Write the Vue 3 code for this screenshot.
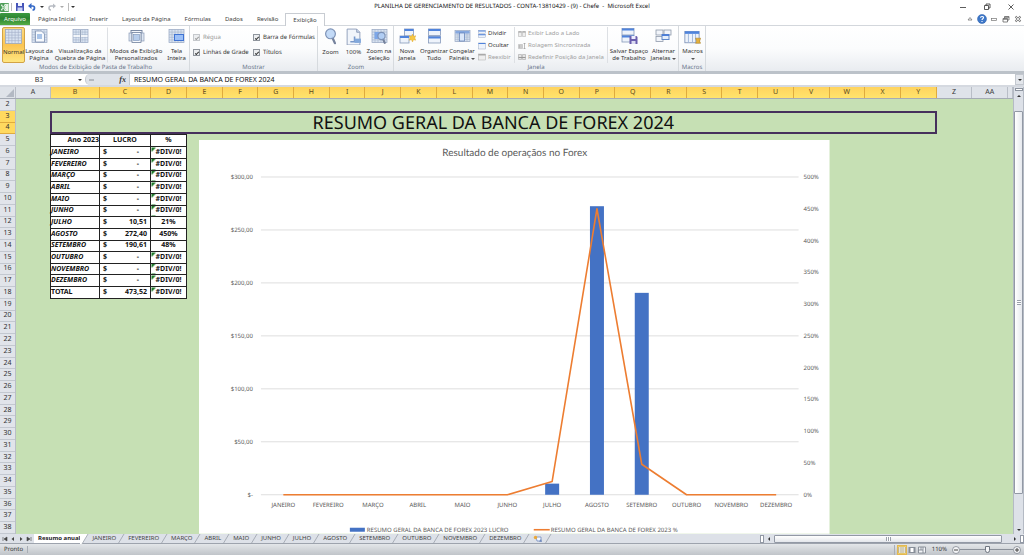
<script setup>
import { computed } from 'vue'

const tabs = ['Página Inicial', 'Inserir', 'Layout da Página', 'Fórmulas', 'Dados', 'Revisão']

const grid = (x, y, w, h) => {
  let s = `<rect x="${x}" y="${y}" width="${w}" height="${h}" fill="#d9e3f1" stroke="#94a4c0" stroke-width=".7"/>`
  for (let i = 1; i < 5; i++) s += `<path d="M${x + (w * i) / 5} ${y}v${h}" stroke="#a3b1ca" stroke-width=".6"/>`
  for (let i = 1; i < 5; i++) s += `<path d="M${x} ${y + (h * i) / 5}h${w}" stroke="#a3b1ca" stroke-width=".6"/>`
  return s
}
const win = (x, y, w, h) =>
  `<rect x="${x}" y="${y}" width="${w}" height="${h}" fill="#eef3fb" stroke="#8598ba" stroke-width=".8"/><path d="M${x} ${y + 1}h${w}" stroke="#4f83dc" stroke-width="2"/>`
const lens = (x, y, r) =>
  `<path d="M${x + r * 0.4} ${y + r * 0.8}l${r * 0.5} ${r * 1.1}" stroke="#76839d" stroke-width="2.2" stroke-linecap="round"/><circle cx="${x}" cy="${y}" r="${r}" fill="#b8d4f6" fill-opacity=".85" stroke="#7c91b5" stroke-width="1.1"/>`
const page = '<path d="M2 1h9l3 3v12H2z" fill="#f1f5fb" stroke="#8495b3" stroke-width=".8"/><path d="M11 1v3h3" fill="#c9d5e9" stroke="#8495b3" stroke-width=".8"/>'
const floppy = (x, y, s) =>
  `<g transform="translate(${x} ${y}) scale(${s})"><path d="M0 0h7l1 1v7H0z" fill="#6a5fae"/><path d="M2 0h4v3H2z" fill="#eef"/><path d="M2 5h4v3H2z" fill="#dcdcf2"/></g>`

const icons = {
  normal: grid(0.5, 1.5, 15, 13),
  layout: `${grid(0.5, 1.5, 15, 13)}<path d="M4 3h6l3 3v8H4z" fill="#f6f9fd" stroke="#7d90b0" stroke-width=".8"/><rect x="5.5" y="6" width="5" height="5" fill="#a9c4e8"/>`,
  breaks: `${grid(0.5, 1.5, 15, 13)}<path d="M8 2v12M1 8h14" stroke="#fff" stroke-width="1.4"/><path d="M8 2v12" stroke="#6d7f9f" stroke-width=".7"/>`,
  custom: '<rect x="2.500" y="2.500" width="11" height="8" fill="#f3f6fb" stroke="#6f7f9c" stroke-width=".9"/><rect x=".5" y="5" width="3" height="8" fill="#dde6f2" stroke="#8c9bb7" stroke-width=".7"/><rect x="12.500" y="5" width="3" height="8" fill="#dde6f2" stroke="#8c9bb7" stroke-width=".7"/><rect x="3.500" y="4.500" width="9" height="10" fill="#f7fafe" stroke="#6f7f9c" stroke-width=".8"/><rect x="5" y="6.500" width="6" height="6" fill="#b7cdeb" stroke="#7b92b6" stroke-width=".6"/>',
  full: `${grid(0.5, 1.5, 15, 13)}<rect x="6" y="6.500" width="9" height="6" fill="#9cc0f7" stroke="#3f73d2"/>`,
  zoom: lens(8, 5.5, 4.6),
  hundred: `${page}<path d="M9 8v5M5 13h8" stroke="#7898ca" stroke-width="1.5"/><rect x="9" y="10" width="6" height="4" fill="#83a9dc"/>`,
  zoomsel: `${grid(0.5, 1.5, 15, 13)}<rect x="3" y="4" width="9" height="7" fill="#7da7e8"/>${lens(10, 8, 3.6)}`,
  newwin: `${win(5, 1, 9, 7)}${win(0.5, 8, 9, 7)}<path d="M13 6l1 2.300 2.300-.6-1 2.300 1 2.200-2.300-.5-1 2.300-1-2.300-2.300.5 1-2.200-1-2.300 2.300.6z" fill="#f7c843" stroke="#dba227" stroke-width=".4"/>`,
  arrange: `${win(2, 1, 12, 6.5)}${win(2, 8.500, 12, 6.5)}`,
  freeze: `${grid(0.5, 2.5, 15, 11)}<rect x="1" y="3" width="14" height="2.500" fill="#86a8df"/><rect x="5" y="5" width="5" height="8" fill="#dce8fa" stroke="#5e7eb5" stroke-width=".7"/>`,
  save: `${win(0.5, 0.5, 12, 6.5)}${win(0.5, 7.5, 12, 6.5)}${floppy(8, 8, 1)}`,
  switchw: '<rect x=".5" y="2" width="7" height="5" fill="#f2f5fa" stroke="#8e99ab" stroke-width=".8"/><rect x="8.500" y="2" width="7" height="5" fill="#f2f5fa" stroke="#8e99ab" stroke-width=".8"/><rect x=".5" y="8.500" width="7" height="5" fill="#f2f5fa" stroke="#8e99ab" stroke-width=".8"/><rect x="6.500" y="6.500" width="7" height="5" fill="#e5effc" stroke="#5f87c9"/><path d="M6.500 7.200h7" stroke="#4479d8" stroke-width="1.500"/>',
  macros: '<rect x=".5" y="3.500" width="14" height="11" fill="#eef3fb" stroke="#7a8fb5" stroke-width=".8"/><path d="M.5 4.500h14" stroke="#4f83dc" stroke-width="2.500"/><path d="M4 6v8M8 6v8M11 6v8" stroke="#a6bbdd"/><path d="M11 10h5l-1 3 1 2h-5l1-2z" fill="#e4b13c" stroke="#a97a20" stroke-width=".5"/>',
  split: `${win(1, 1, 14, 6)}${win(1, 8.500, 14, 6)}`,
  hide: win(1, 2, 14, 12),
  unhide: '<rect x="1" y="2" width="14" height="12" fill="#eee" stroke="#aaa"/><path d="M1 3.500h14" stroke="#aaa" stroke-width="3"/>',
  side: '<path d="M1 3h6v10H1zM9 3h6v10H9z" fill="#eee" stroke="#aaa"/><path d="M1 4h6M9 4h6" stroke="#999" stroke-width="2"/>',
  sync: '<path d="M1 5h8v8H1z" fill="#ddd" stroke="#aaa"/><path d="M3 6v6M6 6v6" stroke="#999"/><path d="M13 2v12M11 4l2-2 2 2M11 12l2 2 2-2" fill="none" stroke="#999" stroke-width="1.300"/>',
  reset: '<path d="M1 3h6v10H1zM9 3h6v10H9z" fill="#e4e4e4" stroke="#999"/><path d="M1 9h14" stroke="#999" stroke-width="2"/>',
}

const viewButtons = [
  { icon: 'normal', lines: ['Normal'], cls: 'w22 on' },
  { icon: 'layout', lines: ['Layout da', 'Página'], cls: 'w28' },
  { icon: 'breaks', lines: ['Visualização da', 'Quebra de Página'], cls: 'w54' },
  { icon: 'custom', lines: ['Modos de Exibição', 'Personalizados'], cls: 'w56 cut' },
  { icon: 'full', lines: ['Tela', 'Inteira'], cls: 'w22' },
]
const zoomButtons = [
  { icon: 'zoom', lines: ['Zoom'], cls: 'w22' },
  { icon: 'hundred', lines: ['100%'], cls: 'w22' },
  { icon: 'zoomsel', lines: ['Zoom na', 'Seleção'], cls: 'w28' },
]
const windowButtons = [
  { icon: 'newwin', lines: ['Nova', 'Janela'], cls: 'w24' },
  { icon: 'arrange', lines: ['Organizar', 'Tudo'], cls: 'w28' },
  { icon: 'freeze', lines: ['Congelar', 'Painéis'], cls: 'w28', menu: true },
]
const windowSmall = [
  { icon: 'split', label: 'Dividir' },
  { icon: 'hide', label: 'Ocultar' },
  { icon: 'unhide', label: 'Reexibir', off: true },
]
const windowSide = [
  { icon: 'side', label: 'Exibir Lado a Lado' },
  { icon: 'sync', label: 'Rolagem Sincronizada' },
  { icon: 'reset', label: 'Redefinir Posição da Janela' },
]
const spaceButtons = [
  { icon: 'save', lines: ['Salvar Espaço', 'de Trabalho'], cls: 'w40' },
  { icon: 'switchw', lines: ['Alternar', 'Janelas'], cls: 'w26', menu: true },
]
const checks = [
  { id: 'ck-ruler', label: 'Régua', off: true },
  { id: 'ck-bar', label: 'Barra de Fórmulas' },
  { id: 'ck-lines', label: 'Linhas de Grade' },
  { id: 'ck-titles', label: 'Títulos' },
]

const columns = [...'ABCDEFGHIJKLMNOPQRSTUVWXYZ', 'AA']
const rowNumbers = Array.from({ length: 37 }, (_, i) => i + 2)

const months = ['JANEIRO', 'FEVEREIRO', 'MARÇO', 'ABRIL', 'MAIO', 'JUNHO', 'JULHO', 'AGOSTO', 'SETEMBRO', 'OUTUBRO', 'NOVEMBRO', 'DEZEMBRO']
const profit = [0, 0, 0, 0, 0, 0, 10.51, 272.4, 190.61, 0, 0, 0]
const percent = [0, 0, 0, 0, 0, 0, 21, 450, 48, 0, 0, 0]
const money = (n) => (n ? n.toFixed(2).replace('.', ',') : '-')
const rows = [
  ...months.map((m, i) => ({ name: m, value: money(profit[i]), pct: percent[i] ? percent[i] + '%' : '#DIV/0!', none: !profit[i], error: !percent[i] })),
  { name: 'TOTAL', value: '473,52', pct: '#DIV/0!', total: true, error: true },
]

const base = 355
const height = 318
const left = 62
const right = 600
const step = (right - left) / 12
const cx = (i) => left + step * (i + 0.5)
const moneyTicks = [0, 50, 100, 150, 200, 250, 300].map((v) => ({ v, y: base - (v / 300) * height, label: v ? `$${v},00` : '$-' }))
const pctTicks = Array.from({ length: 11 }, (_, i) => ({ y: base - (i / 10) * height, label: i * 50 + '%' }))
const bars = profit.map((v, i) => ({ x: cx(i) - 7, y: base - (v / 300) * height, h: (v / 300) * height })).filter((b) => b.h)
const line = computed(() => percent.map((v, i) => `${cx(i)},${base - (v / 500) * height}`).join(' '))
</script>

<template>
  <div class="app">
    <header class="titlebar">
      <div class="quick">
        <svg class="xl" viewBox="0 0 10 10"><rect width="10" height="10" rx="1" fill="#4b9c55" /><rect x="5" y="1" width="4.500" height="8" fill="#e6f3e4" /><path d="M1.500 2l5 6M6.500 2l-5 6" stroke="#fff" stroke-width="1.600" /><path d="M2 2l4.500 6M6.500 2L2 8" stroke="#3b9a48" stroke-width=".6" /></svg>
        <i class="bar"></i>
        <button aria-label="Salvar"><svg class="q" viewBox="0 0 8 8"><path d="M0 0h8v8H0z" fill="#4553b8" /><path d="M2 0h4v3H2z" fill="#f1f3ff" /><path d="M1.500 4.500h5V8h-5z" fill="#c8d0f2" /></svg></button>
        <button aria-label="Desfazer"><svg class="q" viewBox="0 0 8 8"><path d="M1 3h3.500a2 2 0 0 1 0 4" fill="none" stroke="#3569c7" stroke-width="1.700" /><path d="M3.500 0v6L0 3z" fill="#3569c7" /></svg></button>
        <span class="caret dark"></span>
        <button aria-label="Refazer"><svg class="q" viewBox="0 0 8 8"><path d="M6.500 3H3a2 2 0 0 0 0 4" fill="none" stroke="#b8bcc3" stroke-width="1.500" /><path d="M5 .5v5L8 3z" fill="#b8bcc3" /></svg></button>
        <span class="caret"></span>
        <i class="bar last"></i>
        <span class="caret dark"></span>
      </div>
      <h1>PLANILHA DE GERENCIAMENTO DE RESULTADOS - CONTA-13810429 - (9) - Chefe &nbsp;- &nbsp;Microsoft Excel</h1>
      <div class="wincontrols">
        <button aria-label="Minimizar"><svg viewBox="0 0 8 8"><path d="M1 4.500h6" stroke="#333" stroke-width=".8" /></svg></button>
        <button aria-label="Restaurar"><svg viewBox="0 0 8 8"><path d="M1.500 2.500h4v4h-4zM3 2.500V1h4v4H5.500" fill="none" stroke="#333" stroke-width=".8" /></svg></button>
        <button aria-label="Fechar"><svg viewBox="0 0 8 8"><path d="M1.500 1.500l5 5M6.500 1.500l-5 5" stroke="#333" stroke-width=".8" /></svg></button>
      </div>
    </header>

    <nav class="tabs">
      <button class="file">Arquivo</button>
      <button v-for="t in tabs" :key="t" class="tab">{{ t }}</button>
      <button class="tab active">Exibição</button>
      <div class="helpers">
        <svg viewBox="0 0 10 10"><path d="M3 6l2-2.500L7 6z" fill="none" stroke="#777" stroke-width=".8" /></svg>
        <svg viewBox="0 0 10 10"><circle cx="5" cy="5" r="4.500" fill="#3e78c9" stroke="#2b5da8" stroke-width=".5" /><path d="M3.500 3.800C3.500 2 6.500 2 6.500 3.700 6.500 4.800 5 4.800 5 6M5 7v1" fill="none" stroke="#fff" stroke-width="1.100" /></svg>
        <svg viewBox="0 0 10 10"><rect x="2.500" y="4.500" width="5" height="2" fill="none" stroke="#777" stroke-width=".7" /></svg>
        <svg viewBox="0 0 10 10"><path d="M2 4.500h4.500V8H2zM3.500 4.500v-2H8V6H6.500M2 5.300h4.500M3.500 3.300H8" fill="none" stroke="#666" stroke-width=".8" /></svg>
        <svg viewBox="0 0 10 10"><path d="M2.500 2.500l5 5M7.500 2.500l-5 5" stroke="#777" stroke-width="2" /><path d="M2.700 2.700l4.600 4.600M7.300 2.700L2.700 7.300" stroke="#fff" stroke-width=".8" /></svg>
      </div>
    </nav>

    <section class="ribbon">
      <div class="group g-view">
        <div class="tools">
          <button v-for="b in viewButtons" :key="b.icon" class="big" :class="b.cls">
            <svg viewBox="0 0 16 16" v-html="icons[b.icon]"></svg>
            <span v-for="l in b.lines" :key="l">{{ l }}</span>
          </button>
        </div>
        <p>Modos de Exibição de Pasta de Trabalho</p>
      </div>
      <div class="group g-show">
        <div class="checks">
          <label v-for="c in checks" :key="c.id" :for="c.id" :class="{ off: c.off }">
            <input :id="c.id" type="checkbox" checked :disabled="c.off" />{{ c.label }}
          </label>
        </div>
        <p>Mostrar</p>
      </div>
      <div class="group g-zoom">
        <div class="tools">
          <button v-for="b in zoomButtons" :key="b.icon" class="big" :class="b.cls">
            <svg viewBox="0 0 16 16" v-html="icons[b.icon]"></svg>
            <span v-for="l in b.lines" :key="l">{{ l }}</span>
          </button>
        </div>
        <p>Zoom</p>
      </div>
      <div class="group g-window">
        <div class="tools">
          <button v-for="b in windowButtons" :key="b.icon" class="big" :class="[b.cls, { menu: b.menu }]">
            <svg viewBox="0 0 16 16" v-html="icons[b.icon]"></svg>
            <span v-for="l in b.lines" :key="l">{{ l }}</span>
          </button>
          <div class="stack s1">
            <button v-for="b in windowSmall" :key="b.icon" :disabled="b.off"><svg viewBox="0 0 16 16" v-html="icons[b.icon]"></svg>{{ b.label }}</button>
          </div>
          <div class="stack s2">
            <button v-for="b in windowSide" :key="b.icon" disabled><svg viewBox="0 0 16 16" v-html="icons[b.icon]"></svg>{{ b.label }}</button>
          </div>
          <button v-for="b in spaceButtons" :key="b.icon" class="big" :class="[b.cls, { menu: b.menu }]">
            <svg viewBox="0 0 16 16" v-html="icons[b.icon]"></svg>
            <span v-for="l in b.lines" :key="l">{{ l }}</span>
          </button>
        </div>
        <p>Janela</p>
      </div>
      <div class="group g-macros">
        <div class="tools">
          <button class="big w26 menu">
            <svg viewBox="0 0 16 16" v-html="icons.macros"></svg>
            <span>Macros</span><span></span>
          </button>
        </div>
        <p>Macros</p>
      </div>
    </section>

    <section class="formula">
      <input class="name" aria-label="Caixa de nome" value="B3" />
      <span class="caret dark"></span>
      <div class="fx"><i></i><b>fx</b></div>
      <input class="value" aria-label="Barra de fórmulas" value="RESUMO GERAL DA BANCA DE FOREX 2024" />
      <button class="expand" aria-label="Expandir"><span class="caret dark"></span></button>
    </section>

    <main class="work">
      <div class="sheet">
        <div class="cols">
          <span class="corner"><svg viewBox="0 0 8 8"><path d="M8 0v8H0z" fill="#b3b9c3" /></svg></span>
          <span v-for="(c, i) in columns" :key="c" :class="{ sel: i > 0 && i < 25 }">{{ c }}</span>
          <span></span>
        </div>
        <div class="body">
          <div class="nums">
            <span v-for="n in rowNumbers" :key="n" :class="{ sel: n === 3 || n === 4 }">{{ n }}</span>
          </div>
          <div class="canvas">
            <div class="heading">RESUMO GERAL DA BANCA DE FOREX 2024</div>
            <table>
              <colgroup><col class="c1" /><col class="c2" /><col class="c3" /></colgroup>
              <thead>
                <tr><th class="year">Ano 2023</th><th>LUCRO</th><th>%</th></tr>
              </thead>
              <tbody>
                <tr v-for="r in rows" :key="r.name">
                  <td :class="r.total ? 'total' : 'month'">{{ r.name }}</td>
                  <td><div class="money" :class="{ none: r.none }"><span>$</span><span>{{ r.value }}</span></div></td>
                  <td class="pct" :class="{ error: r.error }">{{ r.pct }}</td>
                </tr>
              </tbody>
            </table>
            <svg class="chart" viewBox="0 0 631 394" preserveAspectRatio="xMidYMin slice">
              <rect width="631" height="394" fill="#fff" />
              <text class="ctitle" x="316" y="16">Resultado de operaçãos no Forex</text>
              <g v-for="t in moneyTicks" :key="t.v">
                <line :x1="left" :x2="right" :y1="t.y" :y2="t.y" stroke="#dedede" />
                <text class="axis end" x="54" :y="t.y + 2">{{ t.label }}</text>
              </g>
              <text v-for="t in pctTicks" :key="t.label" class="axis" x="605" :y="t.y + 2">{{ t.label }}</text>
              <rect v-for="b in bars" :key="b.x" :x="b.x" :y="b.y" width="14" :height="b.h" fill="#4472c4" />
              <polyline :points="line" fill="none" stroke="#ed7d31" stroke-width="1.600" stroke-linejoin="round" />
              <text v-for="(m, i) in months" :key="m" class="axis mid" :x="cx(i)" y="367">{{ m }}</text>
              <rect x="151" y="388" width="15" height="4" fill="#4472c4" />
              <text class="axis" x="168" y="392">RESUMO GERAL DA BANCA DE FOREX 2023 LUCRO</text>
              <path d="M335 390h16" stroke="#ed7d31" stroke-width="1.600" />
              <text class="axis" x="352" y="392">RESUMO GERAL DA BANCA DE FOREX 2023 %</text>
            </svg>
          </div>
        </div>
      </div>
      <aside class="vscroll" aria-label="Rolagem vertical">
        <i class="splitter"></i>
        <span class="up"></span>
        <div class="vthumb"><i></i></div>
        <span class="down"></span>
      </aside>
    </main>

    <nav class="sheets">
      <div class="arrows">
        <button aria-label="Primeira"><svg viewBox="0 0 6 6"><path d="M1 1v4M5 1v4L2 3z" fill="#444" stroke="#444" stroke-width=".6" /></svg></button>
        <button aria-label="Anterior"><svg viewBox="0 0 6 6"><path d="M4 1v4L1.500 3z" fill="#444" /></svg></button>
        <button aria-label="Próxima"><svg viewBox="0 0 6 6"><path d="M2 1v4l2.500-2z" fill="#444" /></svg></button>
        <button aria-label="Última"><svg viewBox="0 0 6 6"><path d="M5 1v4M1 1v4l3-2z" fill="#444" stroke="#444" stroke-width=".6" /></svg></button>
      </div>
      <button class="current">Resumo anual</button>
      <template v-for="(m, i) in months" :key="m">
        <svg class="slash" viewBox="0 0 10 10"><path v-if="i === 0" d="M0 0h8L2 10H0z" fill="#fff" /><path d="M2 10L8 0" stroke="#9aa1ab" stroke-width=".8" /></svg>
        <button class="stab">{{ m }}</button>
      </template>
      <svg class="slash" viewBox="0 0 10 10"><path d="M2 10L8 0" stroke="#9aa1ab" stroke-width=".8" /></svg>
      <button class="add" aria-label="Inserir planilha"><svg viewBox="0 0 10 8"><path d="M3 2h5v4H4z" fill="#f4f8ff" stroke="#6f89bd" stroke-width=".8" /><path d="M8 4l1 3-3-.5" fill="#6f89bd" /><circle cx="2.500" cy="2.500" r="1.700" fill="#eba93a" /></svg></button>
      <svg class="slash" viewBox="0 0 10 10"><path d="M2 10L8 0" stroke="#9aa1ab" stroke-width=".8" /></svg>
      <div class="hscroll">
        <i class="grab"></i>
        <span class="lft"></span>
        <div class="hthumb"><i></i></div>
        <span class="rgt"></span>
        <i class="grab"></i>
      </div>
    </nav>

    <footer class="status">
      <span class="ready">Pronto</span>
      <div class="views">
        <button class="on" aria-label="Normal"><svg viewBox="0 0 8 8"><path d="M.5 1h7v6h-7zM3 1v6M5 1v6M.5 3h7M.5 5h7" fill="#fff" stroke="#9a8c62" stroke-width=".5" /></svg></button>
        <button aria-label="Layout da Página"><svg viewBox="0 0 8 8"><rect x=".5" y="1" width="7" height="6" fill="#888f99" /><rect x="2.500" y="2" width="3" height="4" fill="#fff" /></svg></button>
        <button aria-label="Quebra de Página"><svg viewBox="0 0 8 8"><path d="M.5 1h7v6h-7zM3 1v3M5 1v6M.5 4H5" fill="#f2f4f7" stroke="#777e88" stroke-width=".8" /></svg></button>
      </div>
      <span class="zoomval">110%</span>
      <button class="round" aria-label="Reduzir"><svg viewBox="0 0 8 8"><circle cx="4" cy="4" r="3.500" fill="#f4f5f7" stroke="#737a84" stroke-width=".7" /><path d="M2 4h4" stroke="#444" /></svg></button>
      <input class="slider" type="range" min="0" max="100" value="53" aria-label="Zoom" />
      <button class="round" aria-label="Ampliar"><svg viewBox="0 0 8 8"><circle cx="4" cy="4" r="3.500" fill="#f4f5f7" stroke="#737a84" stroke-width=".7" /><path d="M2 4h4M4 2v4" stroke="#444" /></svg></button>
    </footer>
  </div>
</template>

<style>
html,
body {
  background: #fff;
}
</style>

<style scoped>
.app {
  display: flex;
  flex-direction: column;
  height: 100vh;
  overflow: hidden;
  font: 6px/7px 'Noto Sans', 'Open Sans', sans-serif;
  color: #333;
  text-rendering: geometricPrecision;
}
*,
*::before,
*::after {
  box-sizing: border-box;
}
button,
input {
  font: inherit;
  color: inherit;
  background: none;
  border: 0;
  padding: 0;
  margin: 0;
  border-radius: 0;
}
svg {
  display: block;
}
p,
h1 {
  margin: 0;
}
.caret {
  border: 2px solid transparent;
  border-top-color: #aaa;
  border-bottom: 0;
}
.caret.dark {
  border-top-color: #333;
}

.titlebar {
  display: grid;
  grid-template-columns: 1fr auto 1fr;
  align-items: center;
  height: 13px;
  flex: none;
}
.titlebar h1 {
  font-size: 6px;
  font-weight: 400;
  color: #111;
  white-space: nowrap;
}
.quick {
  display: flex;
  align-items: center;
  gap: 4px;
  padding-top: 1px;
}
.quick .bar {
  width: 1px;
  height: 8px;
  background: #bbb;
}
.quick .last {
  margin-right: -2px;
}
.xl {
  width: 9px;
  height: 9px;
  margin-right: -2px;
}
.q {
  width: 8px;
  height: 8px;
}
.wincontrols {
  display: flex;
  justify-content: flex-end;
  gap: 16px;
  padding-right: 9px;
}
.wincontrols svg {
  width: 8px;
  height: 8px;
}

.tabs {
  display: flex;
  height: 13px;
  flex: none;
  align-items: stretch;
  border-bottom: 1px solid #d3d7dc;
}
.file {
  width: 30px;
  background: linear-gradient(#3c9a41, #2c8332 45%, #54ad44);
  color: #fff;
  border-radius: 1px 1px 0 0;
  margin-right: 1px;
}
.tab {
  padding: 0 7px;
  color: #444;
}
.tab.active {
  border: 1px solid #c8ccd2;
  border-bottom: 0;
  background: #fff;
  margin-bottom: -1px;
}
.helpers {
  margin-left: auto;
  display: flex;
  align-items: center;
  gap: 2px;
  padding-right: 1px;
}
.helpers svg {
  width: 10px;
  height: 10px;
}

.ribbon {
  display: flex;
  flex: none;
  height: 48px;
  background: linear-gradient(#fff, #fbfcfd 50%, #e9ecf0);
  border-bottom: 3px solid #bcc2c9;
}
.group {
  display: flex;
  flex-direction: column;
  justify-content: space-between;
  border-right: 1px solid #d6dade;
  padding-top: 1px;
}
.group p {
  text-align: center;
  color: #68758a;
}
.g-view {
  width: 190px;
  padding-left: 2px;
}
.g-show {
  width: 128px;
}
.g-zoom {
  width: 76px;
  padding-left: 1px;
}
.g-window {
  width: 285px;
}
.g-macros {
  width: 27px;
}
.tools {
  display: flex;
  height: 36px;
}
.big {
  display: flex;
  flex-direction: column;
  align-items: center;
  flex: none;
  white-space: nowrap;
  border: 1px solid transparent;
}
.big svg {
  width: 17px;
  height: 17px;
  margin-bottom: 4px;
}
.big.on {
  background: linear-gradient(#fbd97f, #fbc553 50%, #ffe680);
  border-color: #d2a345;
  border-radius: 2px;
}
.big.cut {
  border-left-color: #dde0e4;
}
.big.menu span:last-child {
  display: flex;
  align-items: center;
  gap: 2px;
  height: 7px;
}
.big.menu span:last-child::after {
  content: '';
  border: 2px solid transparent;
  border-top-color: #555;
  border-bottom: 0;
}
.w22 { width: 23px; }
.w24 { width: 26px; }
.w26 { width: 27px; }
.w28 { width: 28px; }
.w40 { width: 42px; }
.w54 { width: 54px; }
.w56 { width: 58px; }
.checks {
  display: grid;
  grid-template-columns: 60px 1fr;
  grid-template-rows: 15px 15px;
  padding: 3px 0 0 3px;
}
.checks label {
  display: flex;
  align-items: center;
  gap: 3px;
  white-space: nowrap;
}
.checks .off {
  color: #999;
}
.checks input {
  appearance: none;
  width: 7px;
  height: 7px;
  border: 1px solid #8f959d;
  background: #eceef0;
  display: grid;
  place-items: center;
}
.checks input::before {
  content: '';
  width: 4px;
  height: 2px;
  border: solid #333;
  border-width: 0 0 1px 1px;
  transform: rotate(-45deg);
}
.checks .off input {
  border-color: #c5c8cc;
}
.checks .off input::before {
  border-color: #999;
}
.stack {
  display: flex;
  flex-direction: column;
  padding-top: 1px;
  flex: none;
}
.stack button {
  display: flex;
  align-items: center;
  gap: 2px;
  height: 12px;
  white-space: nowrap;
}
.stack button:disabled {
  color: #a0a0a0;
}
.stack svg {
  width: 8px;
  height: 8px;
}
.s1 {
  width: 38px;
  padding-left: 2px;
}
.s2 {
  width: 94px;
  padding-left: 3px;
  border: solid #dde0e4;
  border-width: 0 1px;
}

.formula {
  display: flex;
  align-items: center;
  flex: none;
  height: 13px;
  background: #fff;
  border-bottom: 2px solid #d5d9e0;
  font-size: 7px;
}
.formula .name {
  width: 78px;
  text-align: center;
}
.fx {
  display: flex;
  justify-content: space-between;
  align-items: center;
  align-self: stretch;
  width: 45px;
  margin-left: 3px;
  padding: 0 3px 0 3px;
  background: #dfe3e9;
  border-radius: 5px 0 0 5px;
  border: 1px solid #c3c8cf;
  border-width: 0 1px 0 1px;
}
.fx i {
  width: 5px;
  height: 2px;
  border: 1px solid #b3b8bf;
}
.fx b {
  font: italic bold 8px/9px 'Liberation Serif', serif;
}
.formula .value {
  flex: 1;
  min-width: 0;
  padding-left: 4px;
  color: #111;
}
.expand {
  width: 9px;
  align-self: stretch;
  display: grid;
  place-items: center;
  background: #e3e6eb;
  border: 1px solid #c3c8cf;
}

.work {
  display: flex;
  flex: 1;
  min-height: 0;
}
.sheet {
  flex: 1;
  min-width: 0;
  display: flex;
  flex-direction: column;
}
.cols {
  display: grid;
  grid-template-columns: 16px 35px 49px 51px 36px repeat(23, 1fr) 5px;
  height: 12px;
  flex: none;
  background: #dfe3e9;
  border-bottom: 1px solid #a5abb5;
}
.cols span {
  font-size: 7px;
  line-height: 11px;
  text-align: center;
  border-right: 1px solid #b9bec7;
}
.cols .sel {
  background: linear-gradient(#ffd35e, #ffe46c);
  border-right-color: #dfab3e;
  color: #5d4a1c;
}
.cols .corner {
  display: flex;
  justify-content: flex-end;
  align-items: flex-end;
  padding: 1px;
}
.corner svg {
  width: 8px;
  height: 8px;
}
.body {
  flex: 1;
  min-height: 0;
  display: flex;
}
.nums {
  width: 16px;
  display: grid;
  grid-auto-rows: 1fr;
  background: #e1e4ea;
  border-right: 1px solid #b9bec7;
  font-size: 7px;
}
.nums span {
  display: grid;
  place-items: center;
  min-height: 0;
  line-height: 9px;
  border-bottom: 1px solid #c3c8d0;
}
.nums .sel {
  background: #ffd95f;
  border-bottom-color: #dfab3e;
}
.canvas {
  flex: 1;
  min-width: 0;
  display: grid;
  grid-template-columns: 34px 50px 51px 36px repeat(23, 1fr) 5px;
  grid-template-rows: repeat(37, minmax(0, 1fr));
  background: #c6e0b4;
}
.heading {
  grid-column: 2 / 26;
  grid-row: 2 / 4;
  display: flex;
  align-items: center;
  justify-content: center;
  border: 2px solid #46305c;
  font-size: 18px;
  line-height: 20px;
  color: #111;
  white-space: nowrap;
}
table {
  grid-column: 2 / 5;
  grid-row: 4 / 18;
  width: 136px;
  height: 100%;
  border-collapse: collapse;
  table-layout: fixed;
  background: #fff;
  font-weight: 700;
  font-size: 7px;
  line-height: 9px;
  color: #111;
}
thead tr {
  height: 12px;
}
.c1 { width: 49px; }
.c2 { width: 51px; }
.c3 { width: 36px; }
th,
td {
  border: 1px solid #222;
  padding: 0;
  text-align: center;
  white-space: nowrap;
}
th.year {
  text-align: right;
}
td.month,
td.total {
  text-align: left;
}
td.month {
  font-style: italic;
}
.money {
  display: flex;
  justify-content: space-between;
  padding: 0 3px;
}
.money.none {
  padding-right: 11px;
}
.error {
  background: linear-gradient(135deg, #1f7a2a 3px, transparent 3px);
}
.chart {
  grid-column: 5 / 23;
  grid-row: 4 / 38;
  width: calc(100% - 12px);
  height: calc(100% - 6px);
  margin: 6px 0 0 12px;
}
.chart text {
  fill: #595959;
}
.chart .ctitle {
  font-family: Lato, 'Noto Sans', sans-serif;
  font-size: 10px;
  text-anchor: middle;
}
.axis {
  font-size: 6px;
}
.end {
  text-anchor: end;
}
.mid {
  text-anchor: middle;
}

.vscroll {
  width: 11px;
  display: flex;
  flex-direction: column;
  align-items: center;
  background: #dde1e8;
  border: 1px solid #b4bac4;
  border-width: 0 1px;
  padding-top: 1px;
}
.splitter {
  width: 8px;
  height: 3px;
  border: 1px solid #8d949f;
  background: #fff;
}
.up,
.down {
  border: 2px solid transparent;
}
.up {
  border-bottom-color: #333;
  border-top: 0;
  margin: 4px 0 14px;
}
.down {
  border-top-color: #333;
  border-bottom: 0;
  margin: 35px 0 3px;
}
.vthumb {
  flex: 1;
  width: 9px;
  border: 1px solid #9299a5;
  border-radius: 1px;
  background: linear-gradient(90deg, #fff, #e6e9ee);
  display: grid;
  place-items: center;
}
.vthumb i {
  width: 4px;
  height: 5px;
  background: repeating-linear-gradient(#9aa0aa 0 1px, #fff 1px 2px);
}

.sheets {
  display: flex;
  align-items: stretch;
  flex: none;
  height: 10px;
  background: #dde1e8;
  border-bottom: 1px solid #9da3ad;
  line-height: 9px;
  color: #444;
}
.arrows {
  display: flex;
  align-items: center;
  gap: 2px;
  padding: 0 2px;
  width: 34px;
  flex: none;
}
.arrows svg {
  width: 6px;
  height: 6px;
}
.current {
  background: #fff;
  font-weight: 700;
  padding: 0 0 0 4px;
  color: #222;
}
.slash {
  width: 10px;
  height: 10px;
  margin-right: 2px;
  flex: none;
}
.add svg {
  width: 10px;
  height: 8px;
}
.hscroll {
  margin-left: auto;
  width: 264px;
  display: flex;
  align-items: center;
  gap: 4px;
}
.grab {
  width: 4px;
  height: 8px;
  background: #fff;
  border: 1px solid #9299a5;
}
.lft,
.rgt {
  border: 2px solid transparent;
}
.lft {
  border-right-color: #333;
  border-left: 0;
}
.rgt {
  border-left-color: #333;
  border-right: 0;
  margin-left: 8px;
}
.hthumb {
  flex: 1;
  height: 8px;
  border: 1px solid #9299a5;
  border-radius: 1px;
  background: linear-gradient(#fff, #e3e6eb);
  display: grid;
  place-items: center;
}
.hthumb i {
  width: 5px;
  height: 4px;
  background: repeating-linear-gradient(90deg, #9aa0aa 0 1px, #fff 1px 2px);
}

.status {
  display: flex;
  align-items: center;
  flex: none;
  height: 11px;
  padding-right: 3px;
  background: linear-gradient(#e3e6e9, #c0c4c9);
}
.ready {
  padding: 0 4px;
  border-right: 1px solid #a9aeb5;
}
.views {
  display: flex;
  margin-left: auto;
  padding-left: 2px;
  border-left: 1px solid #a9aeb5;
}
.views button {
  padding: 1px;
}
.views .on {
  background: #ffdc6a;
  outline: 1px solid #e3b850;
  outline-offset: -1px;
}
.views svg,
.round svg {
  width: 8px;
  height: 8px;
}
.zoomval {
  margin: 0 5px 0 5px;
}
.slider {
  appearance: none;
  width: 53px;
  height: 9px;
}
.slider::-webkit-slider-runnable-track {
  height: 1px;
  background: #8b919a;
}
.slider::-webkit-slider-thumb {
  appearance: none;
  width: 5px;
  height: 7px;
  margin-top: -3px;
  background: #f5f6f8;
  border: 1px solid #6f7680;
  border-radius: 0 0 3px 3px;
}
</style>
